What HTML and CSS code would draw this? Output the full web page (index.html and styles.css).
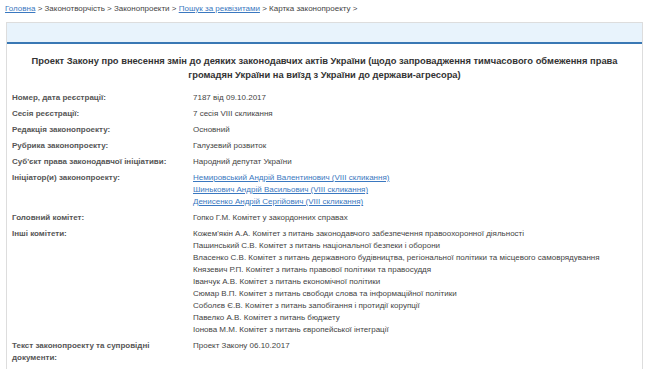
FILE: index.html
```html
<!DOCTYPE html>
<html lang="uk">
<head>
    <meta charset="UTF-8">
    <title>Картка законопроекту</title>
    <link rel="stylesheet" href="styles.css">
</head>
<body>

    <div class="breadcrumbs">
        <a href="#">Головна</a> &gt; Законотворчість &gt; Законопроекти &gt; <a href="#">Пошук за реквізитами</a> &gt; Картка законопроекту &gt;
    </div>

    <div class="card">
        <div class="card-head"></div>

        <h1 class="title">Проект Закону про внесення змін до деяких законодавчих актів України (щодо запровадження тимчасового обмеження права громадян України на виїзд з України до держави-агресора)</h1>

        <div class="info">
            <div class="label">Номер, дата реєстрації:</div>
            <div class="value">7187 від 09.10.2017</div>

            <div class="label">Сесія реєстрації:</div>
            <div class="value">7 сесія VIII скликання</div>

            <div class="label">Редакція законопроекту:</div>
            <div class="value">Основний</div>

            <div class="label">Рубрика законопроекту:</div>
            <div class="value">Галузевий розвиток</div>

            <div class="label">Суб'єкт права законодавчої ініціативи:</div>
            <div class="value">Народний депутат України</div>

            <div class="label">Ініціатор(и) законопроекту:</div>
            <div class="value">
                <a href="#">Немировський Андрій Валентинович (VIII скликання)</a><br>
                <a href="#">Шинькович Андрій Васильович (VIII скликання)</a><br>
                <a href="#">Денисенко Андрій Сергійович (VIII скликання)</a>
            </div>

            <div class="label">Головний комітет:</div>
            <div class="value">Гопко Г.М. Комітет у закордонних справах</div>

            <div class="label">Інші комітети:</div>
            <div class="value">
                Кожем'якін А.А. Комітет з питань законодавчого забезпечення правоохоронної діяльності<br>
                Пашинський С.В. Комітет з питань національної безпеки і оборони<br>
                Власенко С.В. Комітет з питань державного будівництва, регіональної політики та місцевого самоврядування<br>
                Князевич Р.П. Комітет з питань правової політики та правосуддя<br>
                Іванчук А.В. Комітет з питань економічної політики<br>
                Сюмар В.П. Комітет з питань свободи слова та інформаційної політики<br>
                Соболєв Є.В. Комітет з питань запобігання і протидії корупції<br>
                Павелко А.В. Комітет з питань бюджету<br>
                Іонова М.М. Комітет з питань європейської інтеграції
            </div>

            <div class="label">Текст законопроекту та супровідні документи:</div>
            <div class="value">Проект Закону 06.10.2017</div>
        </div>
    </div>

</body>
</html>
```

FILE: styles.css
```css
body {
    font-family: 'Liberation Sans', Arial, sans-serif;
    font-size: 8px;
    color: #444444;
    background-color: #ffffff;
    margin: 0;
    padding: 0;
}

a {
    color: #3a78c0;
    text-decoration: underline;
}

/* Breadcrumbs */
.breadcrumbs {
    height: 22px;
    box-sizing: border-box;
    padding: 3px 0 0 5px;
    line-height: 12px;
    color: #444444;
}

/* Card */
.card {
    margin: 0 7px 0 6px;
    border: 1px solid #dddddd;
    border-bottom: none;
    height: 400px;
}

.card-head {
    height: 19px;
    background-color: #e8f3fc;
    border-bottom: 2px solid #3a78b4;
}

.title {
    margin: 10px 20px 8px;
    font-size: 9.35px;
    line-height: 14px;
    font-weight: bold;
    text-align: center;
    color: #333333;
}

/* Info grid */
.info {
    display: grid;
    grid-template-columns: 186px 1fr;
    line-height: 12px;
}

.label {
    padding: 2px 20px 2px 5px;
    font-weight: bold;
    color: #555555;
}

.value {
    padding: 2px 0;
    color: #444444;
}
```
